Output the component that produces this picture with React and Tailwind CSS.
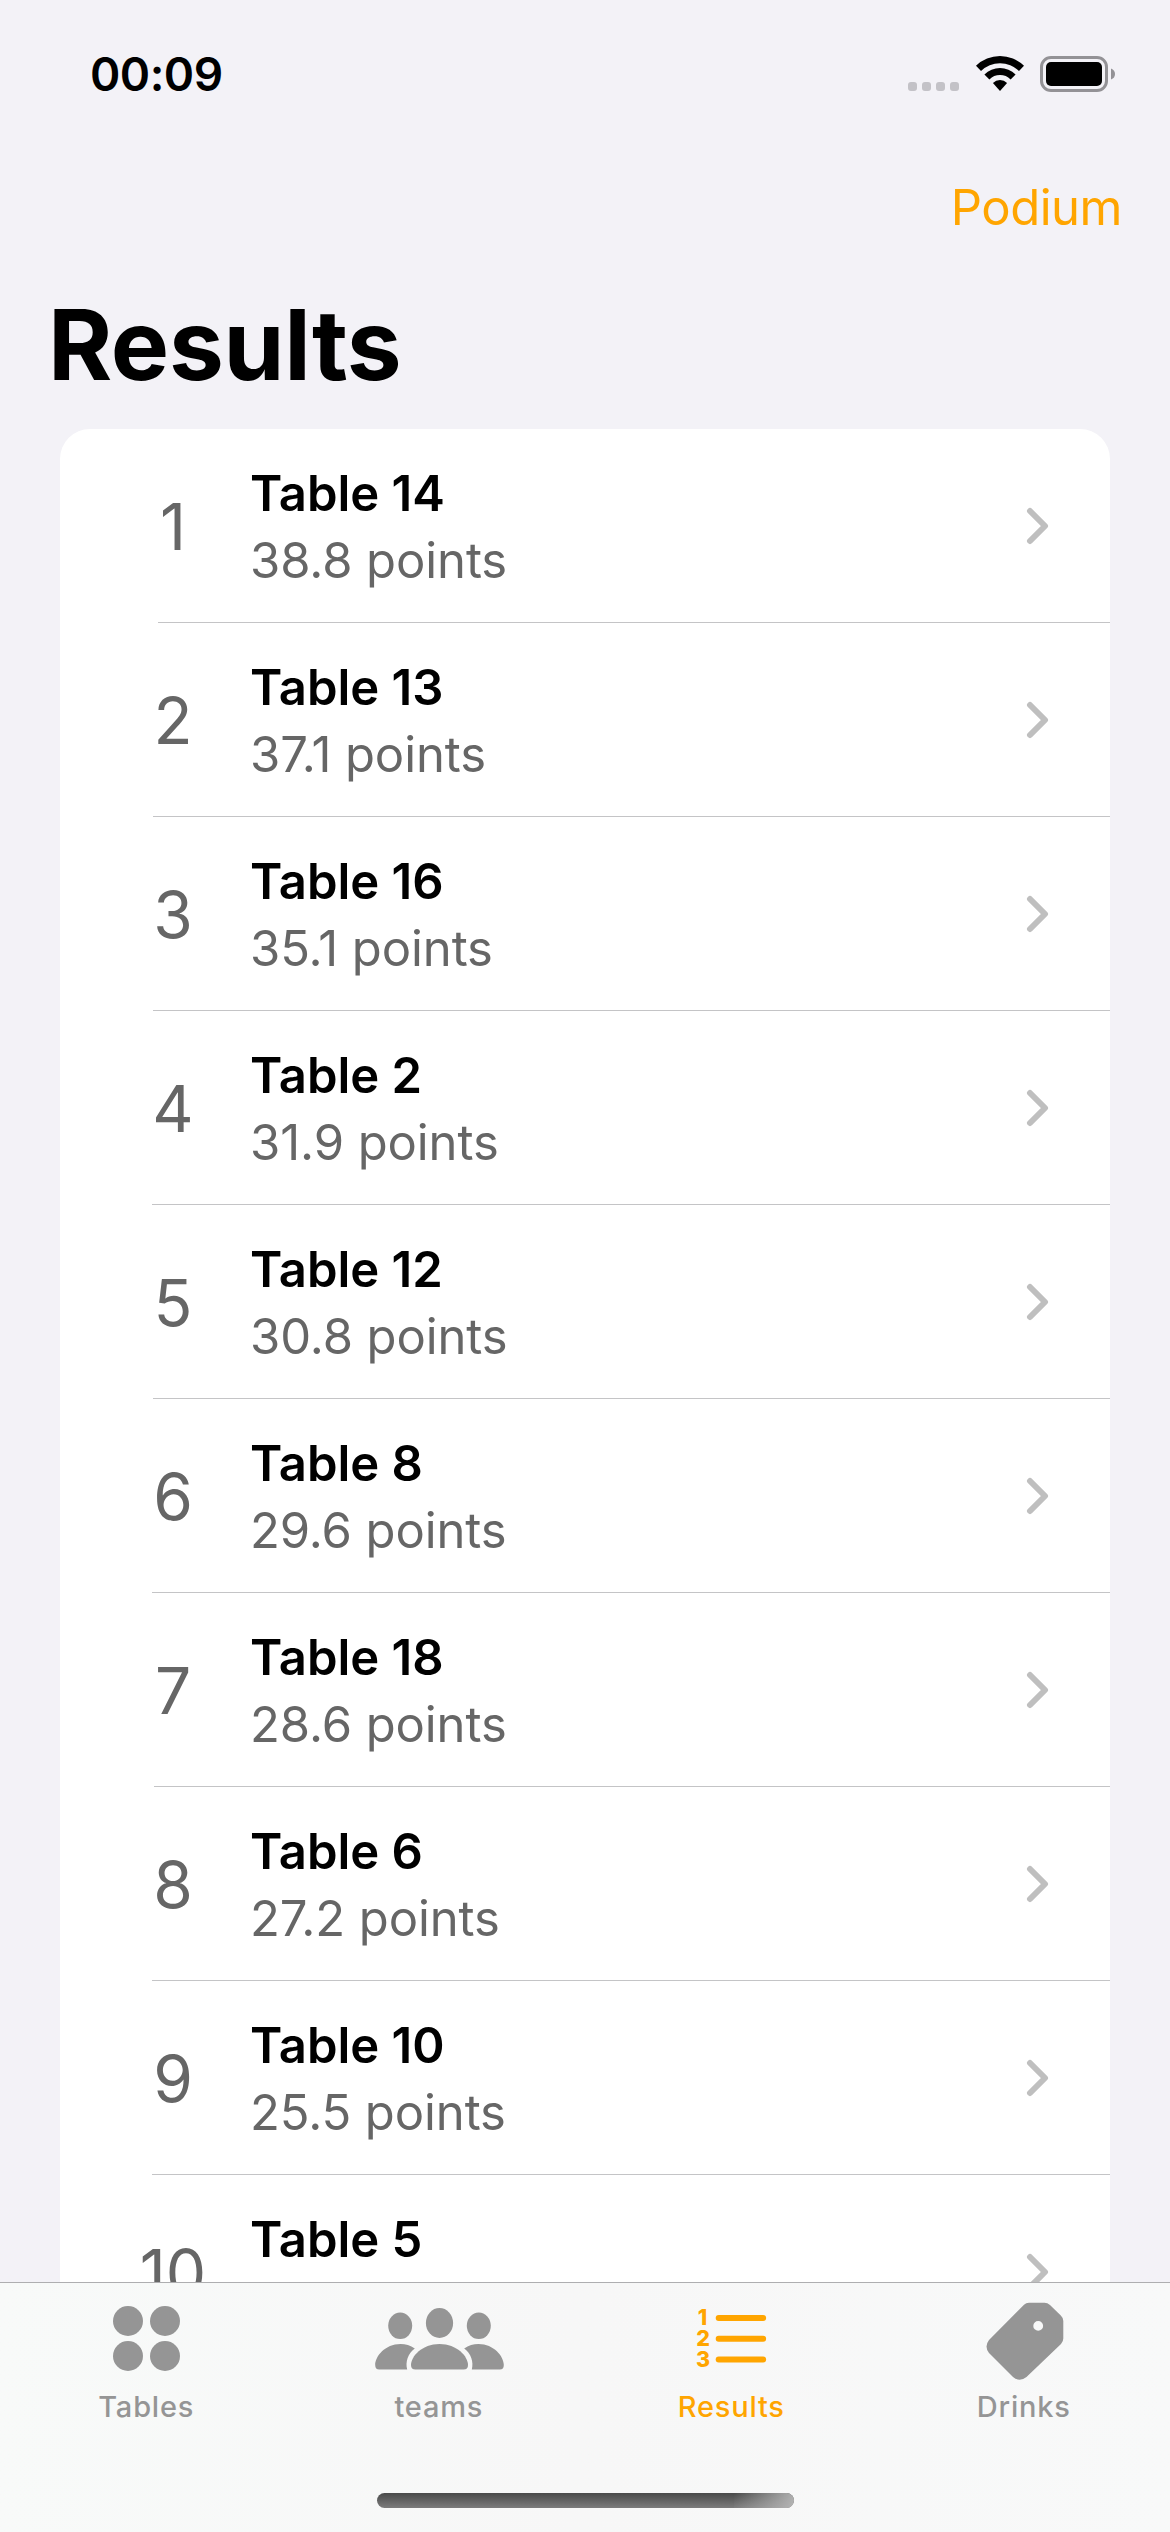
const rows = [
  { rank: 1, name: "Table 14", points: "38.8", inset: "left-[98px]" },
  { rank: 2, name: "Table 13", points: "37.1", inset: "left-[93px]" },
  { rank: 3, name: "Table 16", points: "35.1", inset: "left-[93px]" },
  { rank: 4, name: "Table 2", points: "31.9", inset: "left-[92px]" },
  { rank: 5, name: "Table 12", points: "30.8", inset: "left-[93px]" },
  { rank: 6, name: "Table 8", points: "29.6", inset: "left-[92px]" },
  { rank: 7, name: "Table 18", points: "28.6", inset: "left-[94px]" },
  { rank: 8, name: "Table 6", points: "27.2", inset: "left-[92px]" },
  { rank: 9, name: "Table 10", points: "25.5", inset: "left-[92px]" },
  { rank: 10, name: "Table 5", inset: "left-[81px]" },
];

function StatusBar() {
  return (
    <div className="flex h-[147px] items-start justify-between pl-[90px] pr-[54px]">
      <span className="mt-[44px] text-[46px] font-semibold leading-[60px] tracking-[-0.5px] text-black">
        00:09
      </span>

      <div className="mt-[55px] flex items-start">
        <div className="mt-[27px] flex gap-[5px]">
          <span className="size-[9px] rounded-[3px] bg-[#c3c2c7]" />
          <span className="size-[9px] rounded-[3px] bg-[#c3c2c7]" />
          <span className="size-[9px] rounded-[3px] bg-[#c3c2c7]" />
          <span className="size-[9px] rounded-[3px] bg-[#c3c2c7]" />
        </div>

        <svg className="ml-[16px] h-[37px] w-[50px]" viewBox="0 0 50 37">
          <path d="M1 10.8A34.5 34.5 0 0 1 49 10.8L44 16A27 27 0 0 0 6 16Z" />
          <path d="M9.4 19.4A22.4 22.4 0 0 1 40.6 19.4L35.6 24.4A15.2 15.2 0 0 0 14.4 24.4Z" />
          <path d="M17.9 28A10.2 10.2 0 0 1 32.1 28L25 36Z" />
        </svg>

        <svg className="ml-[15px] h-[38px] w-[76px]" viewBox="0 0 76 38">
          <rect x="1.5" y="2.5" width="65" height="33" rx="9.5" fill="none" stroke="#939296" strokeWidth="3" />
          <rect x="6" y="7" width="56" height="24" rx="5" />
          <path d="M71 13.5Q75 15 75 19T71 24.5Z" fill="#939296" />
        </svg>
      </div>
    </div>
  );
}

function Row({ rank, name, points, inset }) {
  return (
    <div className="relative flex h-[194px] items-center pt-[1px]">
      <div className="ml-[63px] w-[100px] text-center text-[64px] leading-[80px] text-[#666666]">
        {rank}
      </div>
      <div className="ml-[27px] flex-1 text-[49px] leading-[67px]">
        <div className="font-semibold text-black">{name}</div>
        <div className="h-[67px] tracking-[-0.1px] text-[#666666]">
          {points && `${points} points`}
        </div>
      </div>
      <svg className="mr-[60px] mt-[-1px] h-[38px] w-[24px]" viewBox="0 0 24 38">
        <path
          d="M4 4L19 19L4 34"
          fill="none"
          stroke="#bfbfbf"
          strokeWidth="6"
          strokeLinecap="round"
          strokeLinejoin="round"
        />
      </svg>
      <div className={`absolute bottom-0 right-0 h-px bg-[#c4c4c6] ${inset}`} />
    </div>
  );
}

function TablesIcon() {
  return (
    <svg className="h-[80px] w-[136px]" viewBox="0 0 136 80" fill="currentColor">
      <circle cx="50" cy="21" r="15" />
      <circle cx="87" cy="21" r="15" />
      <circle cx="50" cy="56" r="15" />
      <circle cx="87" cy="56" r="15" />
    </svg>
  );
}

function TeamsIcon() {
  return (
    <svg className="h-[80px] w-[136px]" viewBox="0 0 136 80" fill="currentColor">
      <ellipse cx="29.2" cy="25.8" rx="12" ry="13.2" />
      <ellipse cx="68.5" cy="23" rx="13.6" ry="15" />
      <ellipse cx="107.8" cy="25.8" rx="12" ry="13.2" />
      <path d="M68.5 44C51 44 40 56.5 40 65Q40 69.5 44.5 69.5H92.5Q97 69.5 97 65C97 56.5 86 44 68.5 44Z" />
      <path d="M43.8 48.4C39.5 45.5 34.5 44 29.5 44C14 44 4.2 56.5 4.2 65Q4.2 69.5 8.2 69.5H36.2C34.2 61.5 37 53.5 43.8 48.4Z" />
      <path d="M93.2 48.4C97.5 45.5 102.5 44 107.5 44C123 44 132.8 56.5 132.8 65Q132.8 69.5 128.8 69.5H100.8C102.8 61.5 100 53.5 93.2 48.4Z" />
    </svg>
  );
}

function ResultsIcon() {
  return (
    <svg className="h-[80px] w-[136px]" viewBox="0 0 136 80" fill="currentColor">
      <g className="text-[21.5px] font-extrabold" textAnchor="middle">
        <text x="39.5" y="25.3">1</text>
        <text x="40" y="46">2</text>
        <text x="40" y="66.7">3</text>
      </g>
      <rect x="52.7" y="15" width="50.4" height="6" rx="3" />
      <rect x="52.7" y="35.7" width="50.4" height="6" rx="3" />
      <rect x="52.7" y="56.4" width="50.4" height="6" rx="3" />
    </svg>
  );
}

function DrinksIcon() {
  return (
    <svg className="h-[80px] w-[136px]" viewBox="0 0 136 80" fill="currentColor">
      <path
        fillRule="evenodd"
        d="M73 2.7H88.5Q91.5 2.7 94 5L104.8 15.6Q107.3 18 107.3 21V38.5Q107.3 41.5 105 44L70.5 77Q63.5 82.5 57 77L33 53Q28 46.5 33 40L68 4.8Q70 2.7 73 2.7ZM82.2 21A4.9 4.9 0 1 0 82.2 30.8A4.9 4.9 0 1 0 82.2 21Z"
      />
    </svg>
  );
}

const tabs = [
  { label: "Tables", icon: TablesIcon },
  { label: "teams", icon: TeamsIcon },
  { label: "Results", icon: ResultsIcon, active: true },
  { label: "Drinks", icon: DrinksIcon },
];

function TabBar() {
  return (
    <nav className="relative flex h-[250px] shrink-0 border-t border-[#aeaeb0] bg-[#f8f8f8] bg-linear-to-r from-[#f8faf9] via-[#f7f7f7] to-[#f8f9f9]">
      {tabs.map(({ label, icon: Icon, active }) => (
        <div
          key={label}
          className={`flex flex-1 flex-col items-center pt-[17px] ${active ? "text-[#ffa500]" : "text-[#959595]"}`}
        >
          <Icon />
          <span className="mt-[9px] text-[29px] font-medium leading-[36px] tracking-[0.8px]">
            {label}
          </span>
        </div>
      ))}
      {/* home indicator */}
      <div className="absolute bottom-[24px] left-[377px] h-[15px] w-[417px] overflow-hidden rounded-full bg-linear-to-b from-[#4a4a4a] to-[#7c7c7c]">
        <div className="ml-auto h-full w-[60px] bg-linear-[105deg] from-transparent to-[#b4b4b4]" />
      </div>
    </nav>
  );
}

export default function App() {
  return (
    <div className="flex h-[2532px] w-[1170px] flex-col overflow-hidden bg-[#f3f2f7] font-['Inter',sans-serif]">
      <StatusBar />

      <div className="flex h-[132px] items-center justify-end pr-[48px]">
        <button className="mt-[-10px] text-[49px] leading-[60px] tracking-[-0.5px] text-[#ffa500]">
          Podium
        </button>
      </div>

      <h1 className="h-[150px] pl-[48px] text-[98px] font-bold leading-[132px] tracking-[-0.3px] text-black">
        Results
      </h1>

      <div className="mx-[60px] min-h-0 flex-1 overflow-hidden rounded-t-[30px] bg-white">
        {rows.map((row) => (
          <Row key={row.rank} {...row} />
        ))}
      </div>

      <TabBar />
    </div>
  );
}
